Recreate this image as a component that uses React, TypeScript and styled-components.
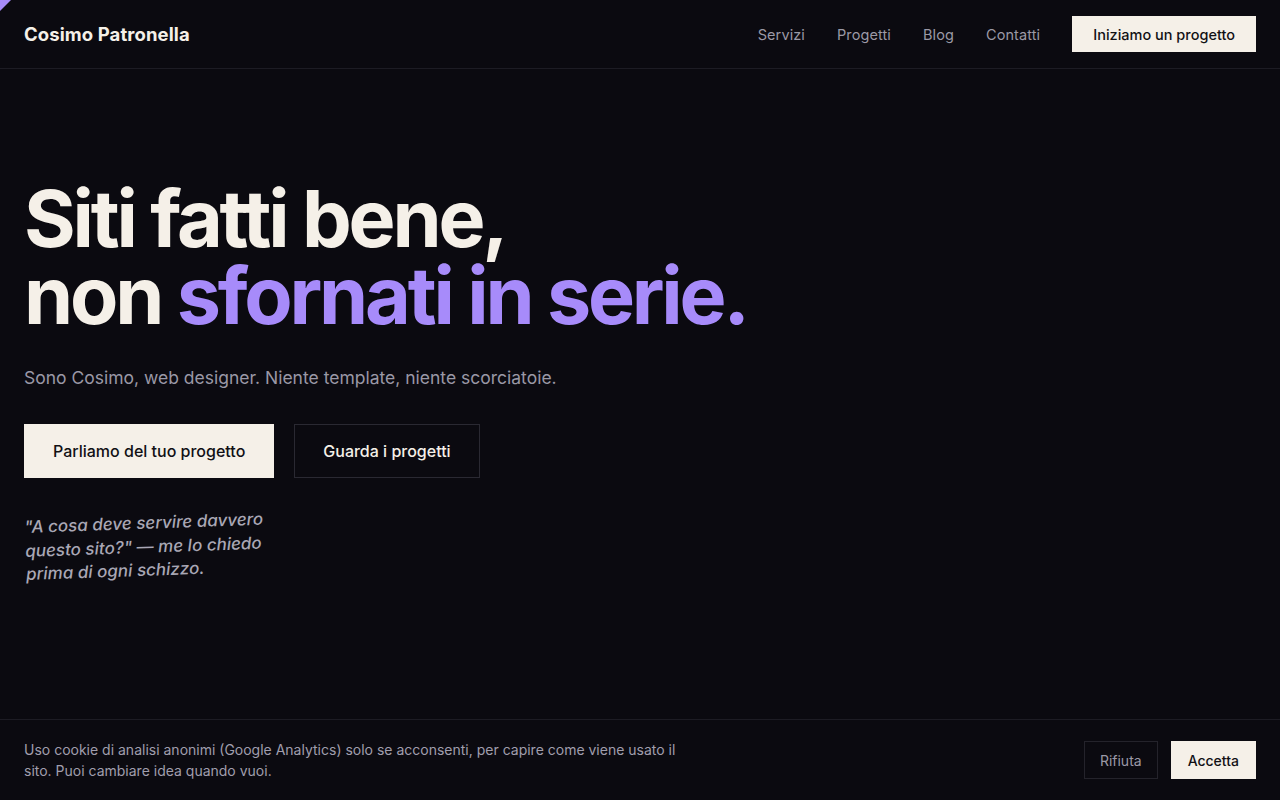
import styled, { createGlobalStyle } from "styled-components";

const GlobalStyle = createGlobalStyle`
  * { box-sizing: border-box; }
  html, body {
    margin: 0;
    padding: 0;
    background: #0b0a10;
    color: #f5f0e8;
    font-family: Inter, "Liberation Sans", sans-serif;
  }
`;

const Page = styled.div`
  position: relative;
  min-height: 800px;
  display: flex;
  flex-direction: column;
  background: #0b0a10;
  overflow: hidden;
`;

const CornerMark = styled.div`
  position: absolute;
  top: 0;
  left: 0;
  width: 0;
  height: 0;
  border-top: 11px solid #a78bfa;
  border-right: 11px solid transparent;
`;

const NavBar = styled.header`
  height: 69px;
  display: flex;
  align-items: center;
  justify-content: space-between;
  padding: 0 24px;
  border-bottom: 1px solid #1d1c24;
`;

const Logo = styled.div`
  font-size: 18.5px;
  font-weight: 700;
  letter-spacing: 0.1px;
  color: #f5f0e8;
`;

const NavLinks = styled.nav`
  display: flex;
  align-items: center;
  gap: 32px;
`;

const NavLink = styled.a`
  font-size: 14.5px;
  color: #9b99a6;
  text-decoration: none;
  letter-spacing: 0.1px;
`;

const Button = styled.button<{ $variant?: "solid" | "ghost"; $size?: "sm" | "lg" }>`
  font-family: Inter, "Liberation Sans", sans-serif;
  font-weight: 500;
  border-radius: 0;
  cursor: pointer;
  font-size: ${(p) => (p.$size === "lg" ? "16px" : "14.5px")};
  height: ${(p) => (p.$size === "lg" ? "54px" : "37px")};
  padding: ${(p) => (p.$size === "lg" ? "0 28px" : "0 20px")};
  background: ${(p) => (p.$variant === "ghost" ? "transparent" : "#f5f0e8")};
  color: ${(p) => (p.$variant === "ghost" ? "#f5f0e8" : "#111015")};
  border: 1px solid ${(p) => (p.$variant === "ghost" ? "#2a2932" : "#f5f0e8")};
`;

const NavButton = styled(Button)`
  height: 36px;
`;

const Hero = styled.main`
  padding: 111px 24px 0;
  display: flex;
  flex-direction: column;
  align-items: flex-start;
`;

const Title = styled.h1`
  margin: 0;
  font-size: 79px;
  line-height: 77px;
  font-weight: 700;
  letter-spacing: -3.2px;
  color: #f5f0e8;
`;

const Accent = styled.span`
  color: #a78bfa;
`;

const Lead = styled.p`
  margin: 33px 0 0;
  font-size: 17.5px;
  color: #9a98a6;
`;

const Actions = styled.div`
  display: flex;
  gap: 20px;
  margin-top: 36px;
`;

const Quote = styled.p`
  margin: 38px 0 0;
  width: 250px;
  font-size: 17px;
  line-height: 23.5px;
  font-style: italic;
  font-weight: 500;
  color: #a9a7b5;
  transform: rotate(-2deg);
  transform-origin: left top;
`;

const CookieBar = styled.div`
  margin-top: auto;
  height: 81px;
  display: flex;
  align-items: center;
  justify-content: space-between;
  padding: 0 24px;
  border-top: 1px solid #1d1c24;
  background: #0b0a10;
`;

const CookieText = styled.p`
  margin: 0;
  max-width: 670px;
  font-size: 14px;
  line-height: 21px;
  color: #a09ead;
`;

const CookieActions = styled.div`
  display: flex;
  gap: 13px;
`;

const CookieButton = styled.button<{ $accept?: boolean }>`
  font-family: Inter, "Liberation Sans", sans-serif;
  font-size: 14px;
  font-weight: ${(p) => (p.$accept ? 500 : 400)};
  height: 38px;
  padding: 0 ${(p) => (p.$accept ? "16px" : "15px")};
  border-radius: 0;
  cursor: pointer;
  background: ${(p) => (p.$accept ? "#f5f0e8" : "transparent")};
  color: ${(p) => (p.$accept ? "#111015" : "#9b99a6")};
  border: 1px solid ${(p) => (p.$accept ? "#f5f0e8" : "#24232b")};
`;

export default function App() {
  return (
    <>
      <GlobalStyle />
      <Page>
        <CornerMark />
        <NavBar>
          <Logo>Cosimo Patronella</Logo>
          <NavLinks>
            <NavLink href="#servizi">Servizi</NavLink>
            <NavLink href="#progetti">Progetti</NavLink>
            <NavLink href="#blog">Blog</NavLink>
            <NavLink href="#contatti">Contatti</NavLink>
            <NavButton>Iniziamo un progetto</NavButton>
          </NavLinks>
        </NavBar>

        <Hero>
          <Title>
            Siti fatti bene,
            <br />
            non <Accent>sfornati in serie.</Accent>
          </Title>
          <Lead>Sono Cosimo, web designer. Niente template, niente scorciatoie.</Lead>
          <Actions>
            <Button $size="lg">Parliamo del tuo progetto</Button>
            <Button $size="lg" $variant="ghost">Guarda i progetti</Button>
          </Actions>
          <Quote>"A cosa deve servire davvero questo sito?" — me lo chiedo prima di ogni schizzo.</Quote>
        </Hero>

        <CookieBar>
          <CookieText>
            Uso cookie di analisi anonimi (Google Analytics) solo se acconsenti, per capire come viene usato il sito. Puoi cambiare idea quando vuoi.
          </CookieText>
          <CookieActions>
            <CookieButton>Rifiuta</CookieButton>
            <CookieButton $accept>Accetta</CookieButton>
          </CookieActions>
        </CookieBar>
      </Page>
    </>
  );
}
